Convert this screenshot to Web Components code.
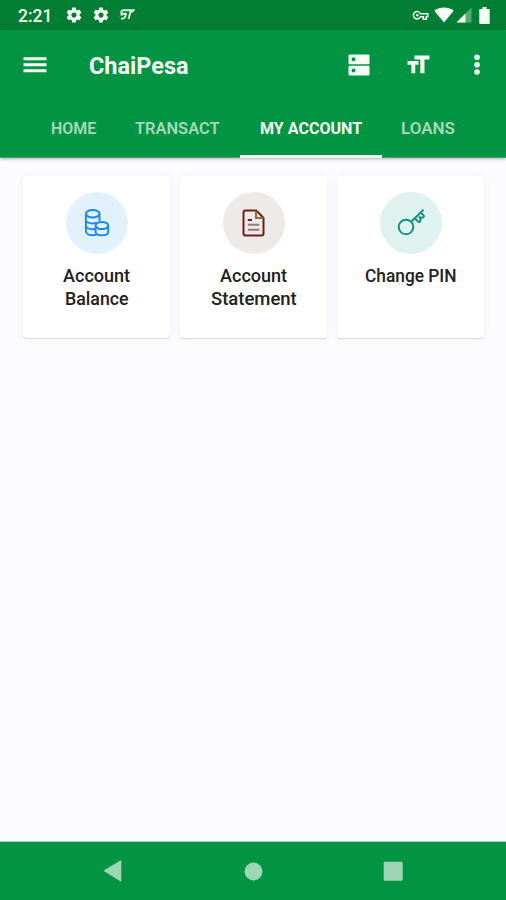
<!DOCTYPE html>
<html lang="en">
<head>
<meta charset="UTF-8">
<title>ChaiPesa</title>
<style>
    body {
        margin: 0;
        background: #fcfcff;
        font-family: Roboto, "Liberation Sans", sans-serif;
        font-weight: 500;
    }
</style>
</head>
<body>
<app-screen>
    <status-bar slot="top"></status-bar>
    <app-header slot="top">
        <fit-text slot="title" width="99">ChaiPesa</fit-text>
        <tab-item slot="tabs"><fit-text width="44">HOME</fit-text></tab-item>
        <tab-item slot="tabs"><fit-text width="84">TRANSACT</fit-text></tab-item>
        <tab-item slot="tabs" active><fit-text width="101">MY ACCOUNT</fit-text></tab-item>
        <tab-item slot="tabs"><fit-text width="53">LOANS</fit-text></tab-item>
    </app-header>

    <menu-card style="--tint: #e3f1fd; --ink: #1b8ae8">
        <svg slot="icon" width="32" height="32" viewBox="0 0 32 32" fill="none" stroke="currentColor" stroke-width="2">
            <ellipse cx="11.7" cy="6.8" rx="6.8" ry="3.7"/>
            <path d="M4.900 6.800v17.500c0 2.300 3 4 6.800 4 1.300 0 2.300-.1 3.300-.4M18.500 6.800v7.200M4.900 12.700c0 2.200 3.100 3.700 6.800 3.700 1.400 0 2.800-.2 3.900-.7M4.900 18.500c0 2.200 3.100 3.700 6.800 3.700h2.300"/>
            <ellipse cx="20.900" cy="18.500" rx="6.300" ry="3.600"/>
            <path d="M14.600 18.500v6.200c0 2.200 2.800 3.600 6.300 3.600s6.300-1.400 6.300-3.600v-6.200"/>
        </svg>
        <fit-text width="66">Account</fit-text>
        <fit-text width="63">Balance</fit-text>
    </menu-card>
    <menu-card style="--tint: #eeeae9; --ink: #6b2116">
        <svg slot="icon" width="32" height="32" viewBox="0 0 32 32" fill="none" stroke="currentColor" stroke-width="2">
            <path d="M7.500 3.500h10.700l7.300 7.300v15.700a2 2 0 0 1-2 2h-16a2 2 0 0 1-2-2v-21a2 2 0 0 1 2-2z"/>
            <path d="M18 3.700v7.300h7.300" stroke="#986840"/>
            <path d="M9.800 13h4.200"/>
            <path d="M9.800 17.800h11.600M9.800 22.800h11.600" stroke="#957a75"/>
        </svg>
        <fit-text width="66">Account</fit-text>
        <fit-text width="84.500">Statement</fit-text>
    </menu-card>
    <menu-card style="--tint: #e0f2f0; --ink: #149181">
        <svg slot="icon" width="32" height="32" viewBox="0 0 32 32" fill="none" stroke="currentColor" stroke-width="2">
            <circle cx="11" cy="20" r="7.300"/>
            <path d="M16.200 14.800L28.500 2.800M19.800 11.300l3.200 3.200c1.500 1 2.500.3 2.500-1.500l-.8-2.700 2.600.4c1.600-.2 2.100-1.500 1.100-2.600l-2.900-2.900"/>
        </svg>
        <fit-text width="91">Change PIN</fit-text>
    </menu-card>

    <nav-bar slot="bottom"></nav-bar>
</app-screen>

<script>
// Text set to an exact width, squeezing or stretching the glyphs
class FitText extends HTMLElement {
    constructor() {
        super();
        this.attachShadow({ mode: 'open' });
    }

    connectedCallback() {
        const ancho = parseFloat(this.getAttribute('width'));
        this.shadowRoot.innerHTML = `
            <style>
                :host { display: block; width: ${ancho}px; }
                span { display: inline-block; white-space: nowrap; transform-origin: 0 50%; }
            </style>
            <span><slot></slot></span>
        `;
        requestAnimationFrame(() => {
            const span = this.shadowRoot.querySelector('span');
            span.style.transform = `scaleX(${(ancho + 1) / span.offsetWidth})`;
            span.style.marginLeft = '-0.5px';
        });
    }
}

class AppScreen extends HTMLElement {
    constructor() {
        super();
        this.attachShadow({ mode: 'open' }).innerHTML = `
            <style>
                :host { display: flex; flex-direction: column; height: 900px; width: 506px; overflow: hidden; }
                main {
                    flex: 1;
                    display: grid;
                    grid-template-columns: repeat(3, 147px);
                    gap: 10px;
                    align-content: start;
                    padding: 18px 0 0 23px;
                }
            </style>
            <slot name="top"></slot>
            <main><slot></slot></main>
            <slot name="bottom"></slot>
        `;
    }
}

class StatusBar extends HTMLElement {
    constructor() {
        super();
        this.attachShadow({ mode: 'open' }).innerHTML = `
            <style>
                :host {
                    display: flex;
                    align-items: center;
                    height: 30px;
                    padding: 0 15px 0 18px;
                    box-sizing: border-box;
                    background: #027d34;
                    color: #f5fff2;
                    font-size: 18px;
                    line-height: 30px;
                }
                fit-text { padding-top: 2px; }
                svg { display: block; fill: currentColor; }
                .left { display: flex; align-items: center; gap: 9px; margin-left: 14px; }
                .right { display: flex; align-items: center; margin-left: auto; }
            </style>
            <fit-text width="33">2:21</fit-text>
            <div class="left">
                <svg width="18" height="18" viewBox="0 0 24 24"><path d="${StatusBar.gear}"/></svg>
                <svg width="18" height="18" viewBox="0 0 24 24"><path d="${StatusBar.gear}"/></svg>
                <svg width="16" height="14" viewBox="0 0 16 14">
                    <path fill="none" stroke="#d9f0d8" stroke-width="1.900" d="M8 2.300H4.300C2 2.300 1.500 5.500 3.500 5.800h2.700M1.500 6.500h2.500M7.300 5L6 9c-.4 1.500-1.600 1.700-4 1.700M7.500 2.300h7l-1 1.200h-2L9.500 11"/>
                </svg>
            </div>
            <div class="right">
                <svg width="17" height="11" viewBox="0 0 17 11">
                    <path fill="none" stroke="currentColor" stroke-width="1.500" d="M8.500 3.700h7.200v3h-1.500v2.600h-2.900V6.700H8.500A3.700 3.700 0 1 1 8.500 3.700z"/>
                    <circle cx="5.300" cy="5.300" r="1.300"/>
                </svg>
                <svg style="margin-left:5px" width="20" height="16" viewBox="0 0 20 16"><path d="M10 15.500L.3 3.800C5.500-.5 14.500-.5 19.700 3.800z"/></svg>
                <svg style="margin-left:2px" width="16" height="16" viewBox="0 0 16 16">
                    <path opacity=".35" d="M15.500.5v15H.5z"/>
                    <path d="M9.500 6.500v9H.5z"/>
                </svg>
                <svg style="margin:0 1px 0 7px" width="11" height="17" viewBox="0 0 11 17"><path d="M3.500 0h4v2H10a.7.7 0 0 1 .7.7v13.500a.7.7 0 0 1-.7.700H1a.7.7 0 0 1-.7-.7V2.700A.7.7 0 0 1 1 2h2.500z"/></svg>
            </div>
        `;
    }

    static gear = 'M19.430 12.980c.04-.32.070-.64.070-.98s-.03-.66-.07-.98l2.110-1.650c.19-.15.240-.42.120-.64l-2-3.460c-.12-.22-.39-.3-.61-.22l-2.490 1c-.52-.4-1.080-.73-1.690-.98l-.38-2.650C14.460 2.180 14.250 2 14 2h-4c-.25 0-.46.18-.49.42l-.38 2.650c-.61.25-1.170.59-1.690.98l-2.490-1c-.23-.09-.49 0-.61.220l-2 3.460c-.13.22-.07.49.120.64l2.110 1.650c-.04.32-.07.65-.07.980s.03.66.070.980l-2.110 1.650c-.19.15-.24.42-.12.640l2 3.460c.12.22.390.3.610.220l2.490-1c.52.4 1.080.730 1.690.980l.38 2.650c.03.24.240.42.490.420h4c.25 0 .46-.18.490-.42l.38-2.650c.61-.25 1.170-.59 1.690-.98l2.490 1c.23.09.490 0 .610-.22l2-3.460c.12-.22.070-.49-.12-.64l-2.110-1.650zM12 15.500c-1.930 0-3.500-1.570-3.500-3.500s1.570-3.500 3.500-3.500 3.500 1.570 3.500 3.500-1.570 3.500-3.500 3.500z';
}

class AppHeader extends HTMLElement {
    constructor() {
        super();
        this.attachShadow({ mode: 'open' }).innerHTML = `
            <style>
                :host {
                    display: block;
                    height: 128px;
                    background: linear-gradient(#029343 127px, #4f9b6d 127px);
                    color: #f4fff3;
                    box-shadow: 0 1px 3px rgba(0, 0, 0, .3);
                }
                .toolbar { display: flex; align-items: center; height: 70px; padding: 0 25px 0 23px; }
                .title { margin-left: 42px; font-size: 23px; font-weight: 700; padding-top: 3px; }
                .actions { display: flex; align-items: center; margin-left: auto; }
                svg { display: block; fill: currentColor; }
                .tabs { display: flex; height: 58px; padding-left: 31px; }
            </style>
            <div class="toolbar">
                <svg width="24" height="18" viewBox="0 0 24 18"><path d="M.5 1.200h23v3H.5zM.5 7.200h23v3H.5zM.5 13.200h23v3H.5z"/></svg>
                <div class="title"><slot name="title"></slot></div>
                <div class="actions">
                    <svg width="22" height="22" viewBox="0 0 22 22"><path fill-rule="evenodd" d="M1.500.5h19a1 1 0 0 1 1 1v7.700a1 1 0 0 1-1 1h-19a1 1 0 0 1-1-1V1.500a1 1 0 0 1 1-1zM5.500 3.300a2 2 0 1 0 0 4 2 2 0 0 0 0-4zM1.500 11.800h19a1 1 0 0 1 1 1v7.700a1 1 0 0 1-1 1h-19a1 1 0 0 1-1-1v-7.700a1 1 0 0 1 1-1zM5.500 14.500a2 2 0 1 0 0 4 2 2 0 0 0 0-4z"/></svg>
                    <svg style="margin:-2px 0 0 37px" width="23" height="19" viewBox="0 0 23 19"><path d="M7.500.5H22.500v4h-5v13.700h-4.200V4.500H7.500zM.5 6h11v3.700H8.200v8.500H4.400V9.700H.5z"/></svg>
                    <svg style="margin-left:43px" width="8" height="22" viewBox="0 0 8 22"><circle cx="4" cy="3.300" r="2.800"/><circle cx="4" cy="10.700" r="2.800"/><circle cx="4" cy="18" r="2.800"/></svg>
                </div>
            </div>
            <div class="tabs"><slot name="tabs"></slot></div>
        `;
    }
}

class TabItem extends HTMLElement {
    constructor() {
        super();
        this.attachShadow({ mode: 'open' }).innerHTML = `
            <style>
                :host {
                    display: flex;
                    align-items: center;
                    height: 58px;
                    padding: 0 20.500px 0 20px;
                    box-sizing: border-box;
                    font-size: 17px;
                    font-weight: 600;
                    color: #a5dab8;
                    border-bottom: 3px solid transparent;
                }
                :host([active]) {
                    font-weight: 700;
                    color: #f4fff3;
                    border-color: #f0f7e9;
                }
            </style>
            <slot></slot>
        `;
    }
}

class MenuCard extends HTMLElement {
    constructor() {
        super();
        this.attachShadow({ mode: 'open' }).innerHTML = `
            <style>
                :host {
                    display: flex;
                    flex-direction: column;
                    align-items: center;
                    height: 162px;
                    padding-top: 16px;
                    box-sizing: border-box;
                    border-radius: 4px;
                    background: #fff;
                    box-shadow: 0 1px 1px rgba(0, 0, 0, .12), 0 0 10px rgba(60, 60, 90, .05);
                    color: #222;
                    font-size: 17.500px;
                    line-height: 22.500px;
                }
                .circle {
                    display: flex;
                    align-items: center;
                    justify-content: center;
                    width: 62px;
                    height: 62px;
                    margin-bottom: 11px;
                    border-radius: 50%;
                    background: var(--tint);
                    color: var(--ink);
                }
            </style>
            <div class="circle"><slot name="icon"></slot></div>
            <slot></slot>
        `;
    }
}

class NavBar extends HTMLElement {
    constructor() {
        super();
        this.attachShadow({ mode: 'open' }).innerHTML = `
            <style>
                :host {
                    display: flex;
                    align-items: center;
                    height: 59px;
                    padding-left: 103px;
                    box-sizing: border-box;
                    background: #029343;
                    border-top: 1px solid #a5d3b5;
                }
                svg { display: block; fill: #9cd6b3; }
            </style>
            <svg width="20" height="22" viewBox="0 0 20 22"><path d="M18.300.8v20a.7.7 0 0 1-1 .5L1.500 11.600a1 1 0 0 1 0-1.500L17.300.4a.7.7 0 0 1 1 .4z"/></svg>
            <svg style="margin-left:121px" width="19" height="19" viewBox="0 0 19 19"><circle cx="9.500" cy="9.500" r="9"/></svg>
            <svg style="margin-left:120px" width="20" height="20" viewBox="0 0 20 20"><rect x=".7" y=".7" width="19" height="19" rx="1.200"/></svg>
        `;
    }
}

customElements.define('fit-text', FitText);
customElements.define('app-screen', AppScreen);
customElements.define('status-bar', StatusBar);
customElements.define('app-header', AppHeader);
customElements.define('tab-item', TabItem);
customElements.define('menu-card', MenuCard);
customElements.define('nav-bar', NavBar);
</script>
</body>
</html>
